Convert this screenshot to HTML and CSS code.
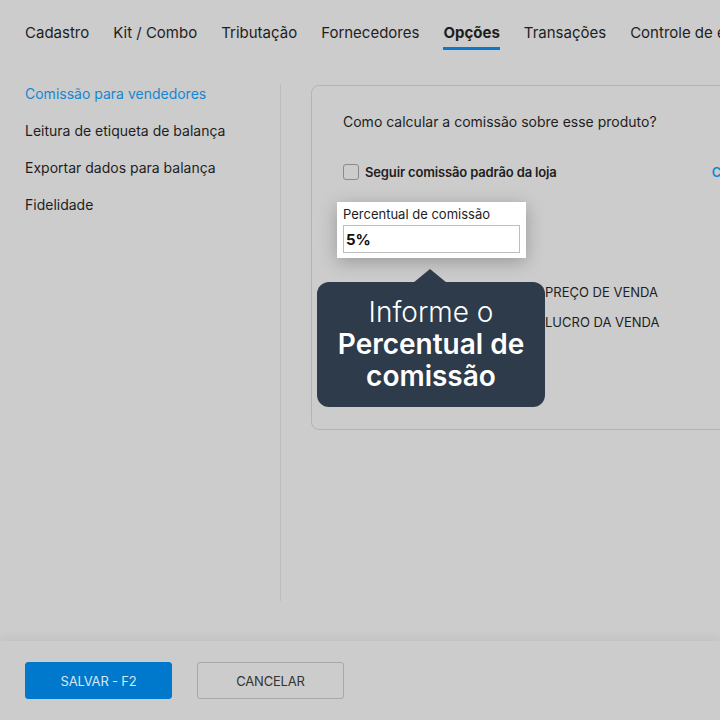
FILE: index.html
```html
<!DOCTYPE html>
<html lang="pt-BR">
<head>
    <meta charset="UTF-8">
    <meta name="viewport" content="width=device-width, initial-scale=1.0">
    <title>Produto - Opções</title>
    <link rel="stylesheet" href="styles.css">
</head>
<body>
    <div id="page">
        <nav class="tabs">
            <a class="tab">Cadastro</a>
            <a class="tab">Kit / Combo</a>
            <a class="tab">Tributação</a>
            <a class="tab">Fornecedores</a>
            <a class="tab active">Opções</a>
            <a class="tab">Transações</a>
            <a class="tab">Controle de estoque</a>
        </nav>
        <div class="main">
            <ul class="side-menu">
                <li class="active">Comissão para vendedores</li>
                <li>Leitura de etiqueta de balança</li>
                <li>Exportar dados para balança</li>
                <li>Fidelidade</li>
            </ul>
            <div class="panel">
                <p class="question">Como calcular a comissão sobre esse produto?</p>
                <div class="check-row">
                    <span class="checkbox"></span>
                    <span class="check-label">Seguir comissão padrão da loja</span>
                    <a class="config-link">Configurar</a>
                </div>
                <div class="field highlight">
                    <label for="perc">Percentual de comissão</label>
                    <input type="text" id="perc" value="5%">
                </div>
                <div class="radio-row">
                    <span class="radio-lead"><span class="radio"></span>Calcular sobre o</span>
                    <span>PREÇO DE VENDA</span>
                </div>
                <div class="radio-row">
                    <span class="radio-lead"><span class="radio"></span>Calcular sobre o</span>
                    <span>LUCRO DA VENDA</span>
                </div>
                <div class="tooltip">
                    <span class="light">Informe o</span>
                    <strong>Percentual de comissão</strong>
                </div>
            </div>
        </div>
        <div class="footer">
            <button class="btn primary">SALVAR - F2</button>
            <button class="btn">CANCELAR</button>
        </div>
    </div>
</body>
</html>
```

FILE: styles.css
```css
body {
    margin: 0;
    padding: 0;
    font-family: Inter, "Noto Sans", sans-serif;
    background-color: #cccccc;
    color: #1e1e1e;
}
#page {
    width: 720px;
    height: 720px;
    overflow: hidden;
    display: flex;
    flex-direction: column;
}
.tabs {
    display: flex;
    gap: 24px;
    padding: 23px 0 0 25px;
    height: 27px;
    white-space: nowrap;
}
.tab {
    font-size: 15px;
    line-height: 20px;
    padding-bottom: 4px;
    height: 20px;
    border-bottom: 3px solid transparent;
}
.tab.active {
    font-weight: 700;
    border-bottom-color: #0b78cf;
}
.main {
    display: flex;
    padding-top: 34px;
    height: 557px;
}
.side-menu {
    flex: none;
    list-style: none;
    margin: 0;
    padding: 0 0 0 25px;
    width: 255px;
    height: 517px;
    border-right: 1px solid #bcbcbc;
}
.side-menu li {
    font-size: 14px;
    line-height: 20px;
    margin-bottom: 17px;
    white-space: nowrap;
}
.side-menu li.active {
    color: #1487d4;
}
.panel {
    position: relative;
    margin: 1px 0 0 30px;
    width: 480px;
    height: 345px;
    flex: none;
    border: 1px solid #b4b4b4;
    border-radius: 8px;
    padding-left: 31px;
    box-sizing: border-box;
}
.question {
    margin: 26px 0 0;
    font-size: 14px;
    line-height: 20px;
}
.check-row {
    display: flex;
    align-items: center;
    margin-top: 30px;
    height: 20px;
    white-space: nowrap;
}
.checkbox {
    width: 14px;
    height: 14px;
    border: 1px solid #8a8a8a;
    border-radius: 3px;
    margin-right: 6px;
}
.check-label {
    font-size: 13px;
    font-weight: 600;
    letter-spacing: -0.15px;
}
.config-link {
    margin-left: 155px;
    font-size: 13px;
    font-weight: 600;
    color: #1487d4;
}
.field {
    margin: 20px 0 0 -6px;
    width: 189px;
    padding: 4px 6px 5px;
    box-sizing: border-box;
    background: white;
}
.highlight {
    box-shadow: 0 4px 18px rgba(0, 0, 0, 0.25);
}
.field label {
    display: block;
    font-size: 13px;
    line-height: 16px;
    margin-bottom: 3px;
}
.field input {
    width: 177px;
    height: 28px;
    box-sizing: border-box;
    border: 1px solid #bdbdbd;
    padding: 0 2px;
    font-family: Inter, sans-serif;
    font-size: 15px;
    font-weight: 700;
    color: #111;
    outline: none;
}
.radio-row {
    display: flex;
    align-items: center;
    font-size: 13px;
    line-height: 20px;
    white-space: nowrap;
}
.field + .radio-row {
    margin-top: 24px;
}
.radio-row + .radio-row {
    margin-top: 10px;
}
.radio-lead {
    display: flex;
    align-items: center;
    width: 202px;
}
.radio {
    width: 14px;
    height: 14px;
    border: 1px solid #8a8a8a;
    border-radius: 50%;
    margin-right: 6px;
}
.tooltip {
    position: absolute;
    left: 5px;
    top: 196px;
    width: 228px;
    padding: 14px 0 15px;
    box-sizing: border-box;
    background: #2d3b4b;
    border-radius: 12px;
    color: #fff;
    text-align: center;
    font-size: 28px;
    line-height: 32px;
}
.tooltip::before {
    content: "";
    position: absolute;
    left: 96px;
    top: -13px;
    border-left: 17px solid transparent;
    border-right: 17px solid transparent;
    border-bottom: 14px solid #2d3b4b;
}
.tooltip .light {
    display: block;
    font-weight: 300;
}
.tooltip strong {
    display: block;
    font-weight: 600;
    padding: 0 4px;
}
.footer {
    flex: 1;
    display: flex;
    gap: 25px;
    padding: 21px 25px 0;
    box-shadow: 0 -4px 10px rgba(0, 0, 0, 0.05);
}
.btn {
    width: 147px;
    height: 37px;
    font-family: Inter, sans-serif;
    font-size: 13px;
    letter-spacing: -0.2px;
    border-radius: 3px;
    background: transparent;
    color: #333;
    border: 1px solid #a8a8a8;
}
.btn.primary {
    background-color: #0079cc;
    border-color: #0079cc;
    color: #d8e7f3;
}
```
